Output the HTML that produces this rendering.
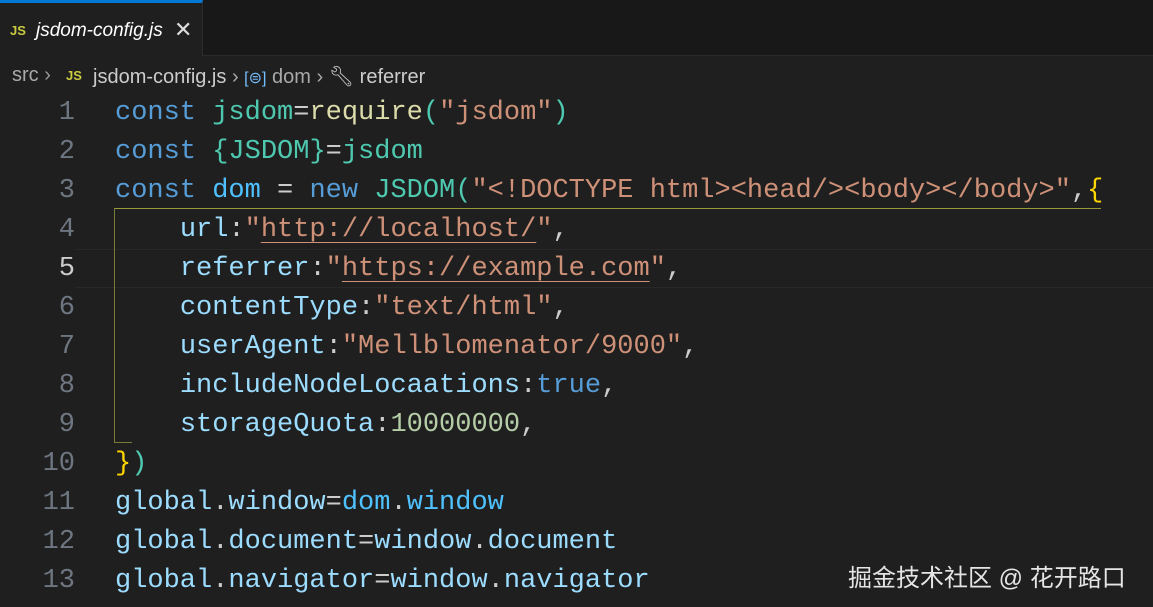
<!DOCTYPE html>
<html><head><meta charset="utf-8"><style>
body{margin:0;width:1153px;height:607px;background:#1f1f1f;overflow:hidden;position:relative;font-family:"Liberation Sans",sans-serif}
.tabbar{position:absolute;left:0;top:0;width:1153px;height:55px;background:#181818;border-bottom:1px solid #2b2b2b}
.tab{position:absolute;left:0;top:0;width:203px;height:56px;background:#1f1f1f;border-top:3px solid #0078d4;box-sizing:border-box;border-right:1px solid #2b2b2b}
.js{color:#cbcb41;font-weight:bold;font-size:13px;position:absolute}
.tabname{position:absolute;left:36px;top:17px;color:#fff;font-style:italic;font-size:19px}
.x{position:absolute;left:174px;top:14px;color:#ddd;font-size:22px}
.bc{position:absolute;top:64px;color:#a9a9a9;font-size:20px;white-space:nowrap}
.code{position:absolute;left:0;top:94px;font-family:"Liberation Mono",monospace;font-size:27px}
.ln{position:absolute;height:39px;line-height:39px;white-space:pre}
.num{position:absolute;width:75px;text-align:right;color:#6e7681;left:0}
.txt{position:absolute;left:115px;color:#cccccc}
.k{color:#569cd6}.v{color:#4fc1ff}.t{color:#4ec9b0}.f{color:#dcdcaa}.s{color:#ce9178}.p{color:#9cdcfe}.n{color:#b5cea8}.y{color:#ffd700}
.u{text-decoration:underline;text-underline-offset:6px;text-decoration-thickness:1px}
.cur{position:absolute;left:75px;top:249px;width:1078px;height:37px;border-top:1px solid #282828;border-bottom:1px solid #282828}
.box{position:absolute;left:114px;top:208px;width:986px;height:234px;border-left:1px solid #7a7a3a;border-top:1px solid #9a9a3a}
.box:after{content:"";position:absolute;left:0;bottom:0;width:17px;border-bottom:1px solid #7a7a3a}
.wm{position:absolute;left:848px;top:558px;color:#e5e5e5;font-size:24px;font-family:"Liberation Sans","Noto Sans CJK SC",sans-serif}
</style></head><body>
<div class="tabbar"><div class="tab"><span class="js" style="left:10px;top:20px">JS</span><span class="tabname">jsdom-config.js</span><span class="x">✕</span></div></div>
<div class="bc" style="left:12px">src <span style="color:#999">›</span></div>
<span class="js" style="left:66px;top:68px">JS</span>
<div class="bc" style="left:93px;color:#ccc">jsdom-config.js <span style="color:#aaa">›</span> <span style="color:#75beff;font-size:16px">[⊜]</span> <span style="color:#a9a9a9">dom</span> <span style="color:#aaa">›</span> <span style="color:#ccc">🔧︎</span> referrer</div>
<div class="cur"></div>
<div class="box"></div>
<div class="code">
<div class="ln" style="top:0"><span class="num">1</span><span class="txt"><span class="k">const</span> <span class="t">jsdom</span>=<span class="f">require</span><span class="t">(</span><span class="s">"jsdom"</span><span class="t">)</span></span></div>
<div class="ln" style="top:39px"><span class="num">2</span><span class="txt"><span class="k">const</span> <span class="t">{</span><span class="t">JSDOM</span><span class="t">}</span>=<span class="t">jsdom</span></span></div>
<div class="ln" style="top:78px"><span class="num">3</span><span class="txt"><span class="k">const</span> <span class="v">dom</span> = <span class="k">new</span> <span class="t">JSDOM(</span><span class="s">"&lt;!DOCTYPE html&gt;&lt;head/&gt;&lt;body&gt;&lt;/body&gt;"</span>,<span class="y">{</span></span></div>
<div class="ln" style="top:117px"><span class="num">4</span><span class="txt">    <span class="p">url</span>:<span class="s">"<span class="u">http://localhost/</span>"</span>,</span></div>
<div class="ln" style="top:156px"><span class="num" style="color:#ccc">5</span><span class="txt">    <span class="p">referrer</span>:<span class="s">"<span class="u">https://example.com</span>"</span>,</span></div>
<div class="ln" style="top:195px"><span class="num">6</span><span class="txt">    <span class="p">contentType</span>:<span class="s">"text/html"</span>,</span></div>
<div class="ln" style="top:234px"><span class="num">7</span><span class="txt">    <span class="p">userAgent</span>:<span class="s">"Mellblomenator/9000"</span>,</span></div>
<div class="ln" style="top:273px"><span class="num">8</span><span class="txt">    <span class="p">includeNodeLocaations</span>:<span class="k">true</span>,</span></div>
<div class="ln" style="top:312px"><span class="num">9</span><span class="txt">    <span class="p">storageQuota</span>:<span class="n">10000000</span>,</span></div>
<div class="ln" style="top:351px"><span class="num">10</span><span class="txt"><span class="y">}</span><span class="t">)</span></span></div>
<div class="ln" style="top:390px"><span class="num">11</span><span class="txt"><span class="p">global</span>.<span class="p">window</span>=<span class="v">dom</span>.<span class="v">window</span></span></div>
<div class="ln" style="top:429px"><span class="num">12</span><span class="txt"><span class="p">global</span>.<span class="p">document</span>=<span class="p">window</span>.<span class="p">document</span></span></div>
<div class="ln" style="top:468px"><span class="num">13</span><span class="txt"><span class="p">global</span>.<span class="p">navigator</span>=<span class="p">window</span>.<span class="p">navigator</span></span></div>
</div>
<div class="wm">掘金技术社区 @ 花开路口</div>
</body></html>
